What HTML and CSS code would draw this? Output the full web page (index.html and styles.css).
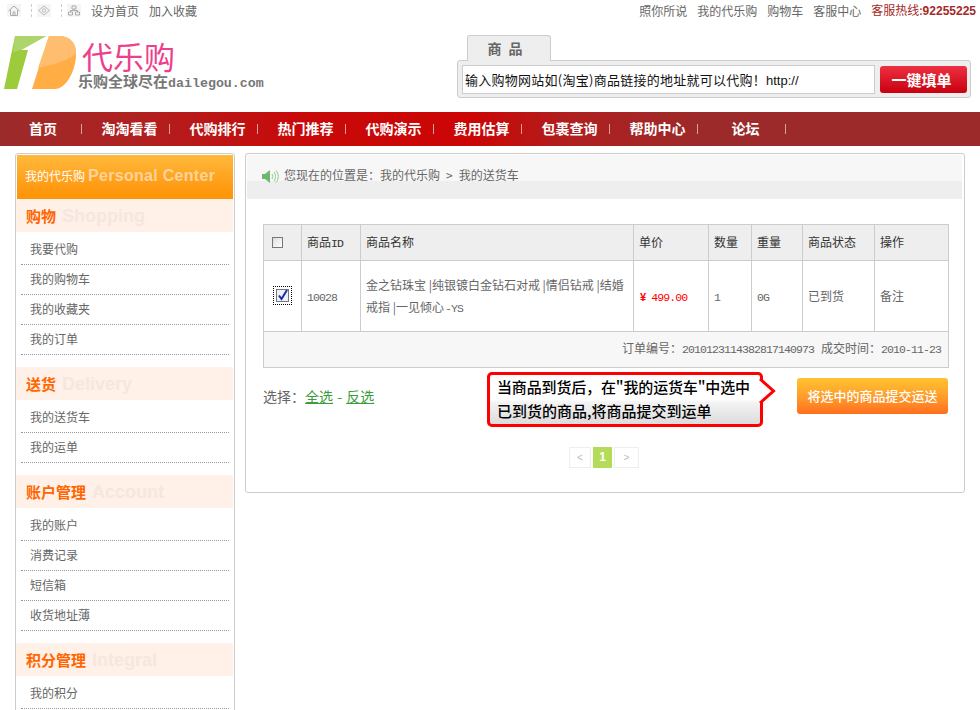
FILE: index.html
```html
<!DOCTYPE html>
<html lang="zh">
<head>
<meta charset="utf-8">
<title>代乐购</title>
<link rel="stylesheet" href="styles.css">
</head>
<body>
<div class="topbar">
  <div class="top-left">
    <svg class="ti" width="14" height="13" viewBox="0 0 14 13"><rect width="14" height="13" fill="#f5f5f5"/><path d="M1.500 7 7 2l5.500 5M3.500 6v5.500h7V6M6 11.500V8h2v3.500" fill="none" stroke="#aaa"/></svg>
    <span class="dash"></span>
    <svg class="ti" width="14" height="13" viewBox="0 0 14 13"><rect width="14" height="13" fill="#f5f5f5"/><path d="M7 2 12.500 6.500 7 11 1.500 6.500Z" fill="none" stroke="#bbb"/><circle cx="7" cy="6.500" r="1.700" fill="none" stroke="#bbb"/></svg>
    <span class="dash"></span>
    <svg class="ti" width="14" height="13" viewBox="0 0 14 13"><rect width="14" height="13" fill="#f5f5f5"/><path d="M5 2h4v3H5zM1.500 8h4v3h-4zM8.500 8h4v3h-4zM7 5v1.500M3.500 8V6.500h7V8" fill="none" stroke="#aaa"/></svg>
    <a class="tl first">设为首页</a><a class="tl">加入收藏</a>
  </div>
  <div class="top-right">
    <a>照你所说</a><a>我的代乐购</a><a>购物车</a><a>客服中心</a>
    <span class="hot">客服热线:<b>92255225</b></span>
  </div>
</div>

<header class="head">
  <div class="logo">
    <svg class="logo-mark" width="80" height="56" viewBox="0 0 80 56">
      <path d="M15 3H46L21 17h7L17 56H4Z" fill="#9ccb3c"/>
      <path d="M15 3H46L21 17 13 19Z" fill="#aed46c"/>
      <path d="M49 3H59C72 3 77 13 76 23 75 39 66 56 55 56H32Z" fill="#ffad44"/>
      <path d="M49 3H59C72 3 77 13 76 21 64 30 50 32 38 35Z" fill="#ffbd70"/>
    </svg>
    <div class="logo-text">
      <div class="logo-name">代乐购</div>
      <div class="logo-slogan">乐购全球尽在<span>dailegou.com</span></div>
    </div>
  </div>
  <div class="search">
    <div class="tab">商 品</div>
    <div class="search-box">
      <div class="search-input">输入购物网站如(淘宝)商品链接的地址就可以代购！<span>http://</span></div>
      <button class="search-btn">一键填单</button>
    </div>
  </div>
</header>

<nav class="nav">
  <a class="first">首页</a><a>淘淘看看</a><a>代购排行</a><a>热门推荐</a><a>代购演示</a><a>费用估算</a><a>包裹查询</a><a>帮助中心</a><a>论坛</a>
</nav>

<div class="page">
  <aside class="side">
    <div class="side-top">我的代乐购<b>Personal Center</b></div>

    <h3 class="sh">购物<span>Shopping</span></h3>
    <ul class="sl">
      <li>我要代购</li><li>我的购物车</li><li>我的收藏夹</li><li>我的订单</li>
    </ul>

    <h3 class="sh">送货<span>Delivery</span></h3>
    <ul class="sl">
      <li>我的送货车</li><li>我的运单</li>
    </ul>

    <h3 class="sh">账户管理<span>Account</span></h3>
    <ul class="sl">
      <li>我的账户</li><li>消费记录</li><li>短信箱</li><li>收货地址薄</li>
    </ul>

    <h3 class="sh">积分管理<span>Integral</span></h3>
    <ul class="sl">
      <li>我的积分</li>
    </ul>
  </aside>

  <main class="panel">
    <div class="crumb">
      <svg width="17" height="15" viewBox="0 0 17 15"><path d="M0 5h3l5-4v13L3 10H0Z" fill="#6cb86c"/><path d="M10 5c1 1.500 1 3.500 0 5M12 3c2 2.500 2 6.500 0 9M14 1.500c3 3.500 3 8.500 0 12" fill="none" stroke="#8ccb8c"/></svg>
      <span>您现在的位置是：我的代乐购</span><span class="gt">&gt;</span><span>我的送货车</span>
    </div>

    <table class="tb">
      <colgroup>
        <col class="c1"><col class="c2"><col class="c3"><col class="c4"><col class="c5"><col class="c6"><col class="c7"><col class="c8">
      </colgroup>
      <thead>
        <tr>
          <th class="ck"><span class="box"></span></th>
          <th>商品<i>ID</i></th><th>商品名称</th><th>单价</th><th>数量</th><th>重量</th><th>商品状态</th><th>操作</th>
        </tr>
      </thead>
      <tbody>
        <tr class="row">
          <td class="ck">
            <span class="focus"><svg width="13" height="13" viewBox="0 0 13 13"><rect x=".5" y=".5" width="12" height="12" fill="#eef" stroke="#777"/><path d="M3 6.500 5.500 10 11 1" fill="none" stroke="#1a2f9c" stroke-width="2"/></svg></span>
          </td>
          <td><i>10028</i></td>
          <td class="name">金之钻珠宝 |纯银镀白金钻石对戒 |情侣钻戒 |结婚戒指 |一见倾心<i>-YS</i></td>
          <td class="price"><b>¥</b><i>499.00</i></td>
          <td><i>1</i></td>
          <td><i>0G</i></td>
          <td>已到货</td>
          <td>备注</td>
        </tr>
        <tr class="foot">
          <td colspan="8">订单编号：<i class="num">2010123114382817140973</i>成交时间：<i>2010-11-23</i></td>
        </tr>
      </tbody>
    </table>

    <div class="actions">
      <div class="pick">选择：<a>全选</a> <em>-</em> <a>反选</a></div>
      <div class="callout">
        当商品到货后，在"我的运货车"中选中<br>已到货的商品,将商品提交到运单
        <svg class="arrow" width="18" height="26" viewBox="0 0 18 26"><path d="M0 0 15 13 0 26Z" fill="#fff"/><path d="M1 1 14.500 13 1 25" fill="none" stroke="#f00" stroke-width="3"/></svg>
      </div>
      <button class="submit">将选中的商品提交运送</button>
    </div>

    <div class="pager">
      <span class="pg">&lt;</span><span class="pg on">1</span><span class="pg">&gt;</span>
    </div>
  </main>
</div>
</body>
</html>
```

FILE: styles.css
```css
* { box-sizing: border-box; }
html, body { margin: 0; padding: 0; height: 710px; overflow: hidden; background: #fff; }
body { font: 12px/1.2 "Noto Sans CJK SC", "Liberation Sans", sans-serif; color: #666; }
a { color: inherit; text-decoration: none; }
i { font-style: normal; }
ul { list-style: none; margin: 0; padding: 0; }
h3 { margin: 0; }

.topbar { height: 22px; display: flex; justify-content: space-between; align-items: center; }
.top-left { display: flex; align-items: center; padding-left: 7px; }
.dash { width: 0; height: 13px; border-left: 1px dashed #ccc; margin: 0 5px 0 10px; }
.tl { margin-left: 10px; }
.tl.first { margin-left: 10px; }
.top-right { display: flex; align-items: center; padding-right: 4px; }
.top-right a { margin-right: 10px; }
.hot { color: #a52a2a; }
.hot b { font-family: "Liberation Sans", sans-serif; }

.head { height: 90px; display: flex; justify-content: space-between; }
.logo { display: flex; width: 300px; padding-top: 17px; }
.logo-mark { flex: none; margin-top: -6px; }
.logo-text { margin-left: -2px; }
.logo-name { font-size: 31px; line-height: 32px; color: #ee3f8c; padding-left: 4px; margin-top: 1px; }
.logo-slogan { font-size: 15px; line-height: 18px; font-weight: 700; color: #777; white-space: nowrap; }
.logo-slogan span { font: 700 13.3px/18px "Liberation Mono", monospace; }

.search { width: 523px; padding: 13px 9px 0 0; }
.tab { width: 84px; height: 26px; margin-left: 10px; margin-bottom: -1px; padding-right: 6px; position: relative; z-index: 1; background: #eee; border: 1px solid #ccc; border-bottom: 0; border-radius: 3px 3px 0 0; font-size: 14px; font-weight: 700; line-height: 24px; text-align: center; color: #666; letter-spacing: 2px; }
.search-box { height: 38px; background: #eee; border: 1px solid #ccc; border-radius: 3px; display: flex; align-items: center; padding: 0 3px 0 4px; gap: 5px; }
.search-input { flex: none; width: 413px; height: 29px; background: #fff; border: 1px solid #ccc; padding-left: 2px; font-size: 13px; line-height: 27px; color: #111; white-space: nowrap; overflow: hidden; letter-spacing: .26px; }
.search-input span { font-family: "Liberation Sans", sans-serif; letter-spacing: 0; }
.search-btn { flex: none; width: 87px; height: 27px; border: 0; border-radius: 3px; background: linear-gradient(#ee3040, #c80010); color: #fff; font: 700 15px/27px "Noto Sans CJK SC", sans-serif; padding: 0 4px 0 0; }

.nav { height: 34px; display: flex; background: linear-gradient(90deg, #9c2b2b 0, #b02020 14%, #c80a0a 30%, #cc0505 48%, #b01f1f 58%, #9c2a2a 72%, #9c2a2a 100%); }
.nav a { width: 88px; height: 34px; padding-left: 7px; text-align: center; font-size: 14px; font-weight: 700; line-height: 33px; color: #fff; position: relative; }
.nav a.first { width: 82px; padding-left: 4px; }
.nav a::after { content: ""; position: absolute; right: 0; top: 12px; width: 1px; height: 10px; background: #d9a0a0; }

.page { display: flex; align-items: flex-start; padding: 7px 0 0 15px; }

.side { width: 220px; flex: none; height: 700px; border: 1px solid #ccc; border-radius: 3px 3px 0 0; padding-top: 1px; }
.side-top { height: 44px; margin: 0 1px 0 1px; background: linear-gradient(#ffb93c, #ff9a12 75%, #ff9506); color: #fff; font-size: 12px; line-height: 41px; padding-left: 8px; }
.side-top b { font: 700 16px/41px "Liberation Sans", sans-serif; color: #ffd49a; margin-left: 3px; letter-spacing: .3px; }
.sh { height: 33px; margin-right: 1px; background: #fff0e8; color: #f60; font-size: 15px; font-weight: 700; line-height: 34px; padding-left: 10px; overflow: hidden; }
.sh span { font: 700 18px/34px "Liberation Sans", sans-serif; color: #f5e7df; margin-left: 6px; }
.sl { margin: 3px 5px 12px; }
.sl li { height: 30px; line-height: 28px; padding-left: 9px; border-bottom: 1px dotted #999; }

.panel { width: 720px; height: 340px; margin-left: 10px; border: 1px solid #ccc; border-radius: 3px; padding: 1px 0 0 1px; }
.crumb { height: 44px; margin-right: 2px; padding: 11px 0 0 15px; display: flex; align-items: flex-start; background: linear-gradient(#f7f7f7 0 58%, #eee 58% 100%); }
.crumb span { line-height: 17px; }
.crumb svg { margin: 3px 5px 0 0; flex: none; }
.crumb .gt { margin: 0 6px; }

.tb { width: 685px; margin: 25px 0 0 16px; border-collapse: collapse; table-layout: fixed; color: #333; }
.tb th, .tb td { border: 1px solid #ccc; padding: 0 0 0 5px; text-align: left; font-weight: 400; }
.tb i { font: 11.5px/1 "Liberation Mono", monospace; letter-spacing: -.9px; }
.c1 { width: 38px; } .c2 { width: 59px; } .c3 { width: 273px; } .c4 { width: 75px; }
.c5 { width: 43px; } .c6 { width: 51px; } .c7 { width: 72px; } .c8 { width: 74px; }
.tb thead tr { height: 36px; background: #eee; }
.row { height: 71px; }
.row td { color: #666; }
.tb .ck { padding: 0 0 0 8px; }
.box { display: block; width: 11px; height: 11px; background: linear-gradient(135deg, #ddd, #fff); border: 1px solid #777; }
.focus { display: block; width: 19px; height: 19px; padding: 2px; margin: 0 0 2px 1px; border: 1px dotted #000; }
.focus svg { display: block; }
.name { line-height: 22px; }
.name i { margin-left: 1px; }
.tb .price { color: #f00; }
.price b { font: 700 11px/1 "Liberation Sans", sans-serif; margin: 0 5px 0 1px; }
.foot { height: 36px; background: #f7f7f7; }
.tb .foot td { text-align: right; padding: 0 7px 2px 0; color: #666; }
.tb .num { margin-right: 7px; }

.actions { display: flex; align-items: flex-start; padding: 4px 0 0 16px; width: 701px; }
.pick { margin-top: 14px; font-size: 14px; line-height: 20px; color: #666; }
.pick a { color: #3c9c3c; text-decoration: underline; }
.pick em { font-style: normal; color: #3c9c3c; margin: 0 1px; }
.callout { position: relative; margin-left: auto; width: 276px; height: 55px; border: 3px solid #f00; border-radius: 5px; background: linear-gradient(#fff 0, #fff 50%, #f4f4f4 55%, #dcdcdc 100%); color: #000; font-size: 15px; font-weight: 500; line-height: 24px; padding: 0 0 0 7px; white-space: nowrap; }
.callout::first-line { letter-spacing: -.15px; }
.arrow { position: absolute; right: -17px; top: 3px; }
.submit { width: 151px; height: 36px; margin: 6px 0 0 34px; border: 0; border-radius: 3px; background: linear-gradient(#ffc430, #ff9a2a 55%, #ff6f1e); color: #fff; font: 500 13px/36px "Noto Sans CJK SC", sans-serif; padding: 0; }

.pager { display: flex; justify-content: center; gap: 2px; margin: 20px 0 0 -3px; }
.pg { width: 22px; height: 21px; border: 1px solid #eee; color: #bbb; font: 10px/19px "Liberation Sans", sans-serif; text-align: center; }
.pg:last-child { width: 25px; }
.pg.on { width: 19px; background: #b4dc5a; border-color: #b4dc5a; color: #fff; font: 700 12px/19px "Liberation Sans", sans-serif; }
```
